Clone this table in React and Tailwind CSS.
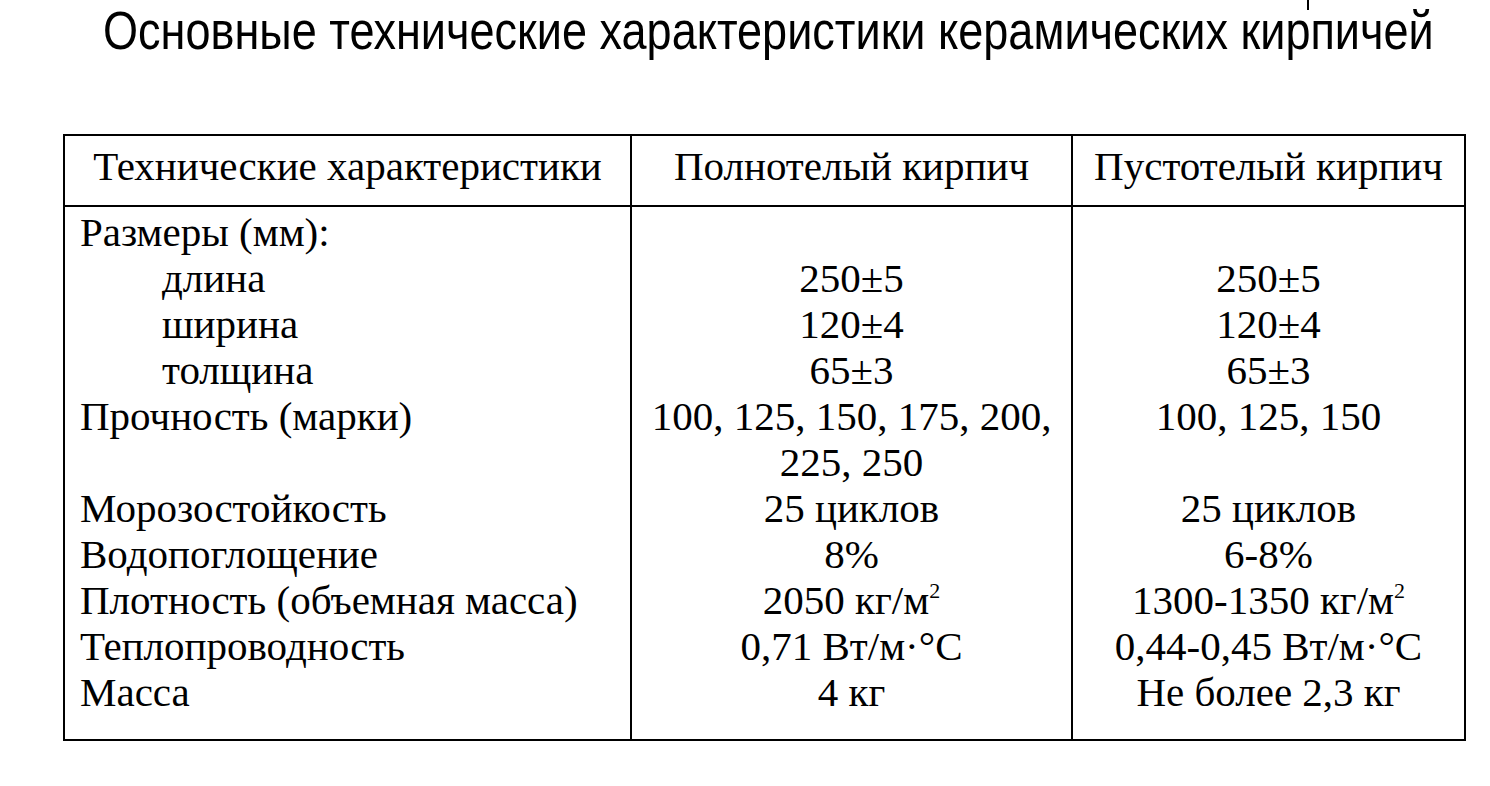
import React from "react";

const rows = [
  { label: "Размеры (мм):", full: "", hollow: "" },
  { label: "длина", indent: true, full: "250±5", hollow: "250±5" },
  { label: "ширина", indent: true, full: "120±4", hollow: "120±4" },
  { label: "толщина", indent: true, full: "65±3", hollow: "65±3" },
  { label: "Прочность (марки)", full: "100, 125, 150, 175, 200,", hollow: "100, 125, 150" },
  { label: "", full: "225, 250", hollow: "" },
  { label: "Морозостойкость", full: "25 циклов", hollow: "25 циклов" },
  { label: "Водопоглощение", full: "8%", hollow: "6-8%" },
  { label: "Плотность (объемная масса)", full: "2050 кг/м", hollow: "1300-1350 кг/м", sup: true },
  { label: "Теплопроводность", full: "0,71 Вт/м·°С", hollow: "0,44-0,45 Вт/м·°С" },
  { label: "Масса", full: "4 кг", hollow: "Не более 2,3 кг" },
];

const Cell = ({ text, sup }) => (
  <div className="h-[46px] leading-[46px] text-center whitespace-nowrap">
    {text}
    {sup && text ? <span className="relative -top-[16px] text-[22px] leading-none">2</span> : null}
  </div>
);

const App = () => {
  return (
    <div className="w-[1490px] h-[786px] bg-white text-black overflow-hidden">
      <div className="relative h-[134px]">
        <div className="absolute left-[1307px] top-0 w-[2px] h-[10px] bg-black" />
        <h1
          className="inline-block ml-[103px] pt-[1px] text-[53px] leading-[60px] font-normal whitespace-nowrap origin-left scale-x-[0.85]"
          style={{ fontFamily: '"Liberation Sans", Arial, sans-serif' }}
        >
          Основные технические характеристики керамических кирпичей
        </h1>
      </div>

      <div
        className="ml-[63px] w-[1403px] border-2 border-black text-[41px]"
        style={{ fontFamily: '"Liberation Serif", "Times New Roman", serif' }}
      >
        <div className="grid grid-cols-[565px_441px_1fr] h-[71px] border-b-2 border-black">
          <div className="flex items-center justify-center pb-[14px] whitespace-nowrap">Технические характеристики</div>
          <div className="flex items-center justify-center pb-[14px] border-l-2 border-black whitespace-nowrap">Полнотелый кирпич</div>
          <div className="flex items-center justify-center pb-[14px] border-l-2 border-black whitespace-nowrap">Пустотелый кирпич</div>
        </div>
        <div className="grid grid-cols-[565px_441px_1fr]">
          <div className="pl-[15px] pt-[2px] pb-[24px]">
            {rows.map((r, i) => (
              <div key={i} className={`h-[46px] leading-[46px] whitespace-nowrap ${r.indent ? "pl-[82px]" : ""}`}>
                {r.label}
              </div>
            ))}
          </div>
          <div className="border-l-2 border-black pt-[2px] pb-[24px]">
            {rows.map((r, i) => (
              <Cell key={i} text={r.full} sup={r.sup} />
            ))}
          </div>
          <div className="border-l-2 border-black pt-[2px] pb-[24px]">
            {rows.map((r, i) => (
              <Cell key={i} text={r.hollow} sup={r.sup} />
            ))}
          </div>
        </div>
      </div>
    </div>
  );
};

export default App;
